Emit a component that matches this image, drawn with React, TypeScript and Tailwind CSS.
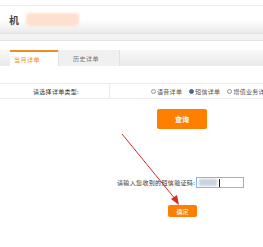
import React from 'react';

const font = { fontFamily: '"Noto Sans CJK SC", "Liberation Sans", sans-serif' };

function Radio({ checked, label }: { checked?: boolean; label: string }) {
  return (
    <span className="flex items-center gap-[1px]">
      <span
        className={
          'inline-block h-[5px] w-[5px] shrink-0 rounded-full border ' +
          (checked ? 'border-[#3a6ea5] bg-[#3a6ea5]' : 'border-[#9a9a9a] bg-[#f4f4f4]')
        }
      />
      <span>{label}</span>
    </span>
  );
}

export default function App() {
  return (
    <div className="relative h-[247px] w-[263px] overflow-hidden bg-white text-[#333]" style={font}>
      {/* header */}
      <div className="mt-[5px] border-t border-[#ececec]">
        <div className="flex h-[27px] items-center gap-[7px] bg-gradient-to-b from-white via-white to-[#ebebeb] pl-[9px]">
          <span className="text-[10px] font-bold leading-none text-[#444]">机</span>
          <span className="h-[13px] w-[53px] rounded-sm bg-[#fde0d0] blur-[1px]" />
        </div>
        <div className="h-[8px] border-y border-[#e4e4e4] bg-[#f3f3f3]" />
      </div>

      {/* tabs */}
      <div className="mt-[9px] flex h-[16px] bg-gradient-to-b from-[#f9f9f9] to-[#e9e9e9] text-[6px] tracking-[0.5px]">
        <div className="ml-[10px] flex w-[48px] shrink-0 items-center border-t-2 border-[#f08a24] bg-white pl-[4px] text-[#f08a24]">
          当月详单
        </div>
        <div className="flex w-[62px] shrink-0 items-center border-x border-[#e2e2e2] bg-[#f0f0f0] pl-[14px] text-[#777]">
          历史详单
        </div>
      </div>

      {/* type row */}
      <div className="mt-[17px] flex h-[16px] border-y border-[#ececec] text-[6px] tracking-[0.3px]">
        <div className="flex w-[110px] shrink-0 items-center border-r border-[#ececec] pl-[33px]">
          请选择详单类型:
        </div>
        <div className="flex min-w-0 flex-1 items-center gap-[7px] overflow-hidden whitespace-nowrap pl-[41px] text-[#555]">
          <Radio label="语音详单" />
          <Radio checked label="短信详单" />
          <Radio label="增值业务详单" />
        </div>
      </div>

      <div className="mt-[10px] flex pl-[157px]">
        <button className="h-[20px] w-[50px] rounded-[2px] bg-[#ff8000] text-[7px] font-bold text-white">
          查询
        </button>
      </div>

      {/* verification */}
      <div className="mt-[48px] flex items-center gap-[1px] whitespace-nowrap pl-[117px] text-[6px] tracking-[0.35px]">
        <span>请输入您收到的短信验证码:</span>
        <div className="flex h-[11px] w-[48px] shrink-0 items-center border border-[#8fb3d9] bg-white pl-[2px]">
          <span className="h-[7px] w-[18px] bg-[#c9d3df] blur-[1px]" />
          <span className="ml-[2px] h-[8px] w-[1px] bg-[#222]" />
        </div>
      </div>

      <div className="mt-[17px] flex pl-[168px]">
        <button className="h-[12px] w-[29px] rounded-[2px] bg-[#ff8000] text-[6px] text-white">确定</button>
      </div>

      {/* annotation arrow */}
      <svg className="absolute left-0 top-0" width="263" height="247" viewBox="0 0 263 247">
        <line x1="122" y1="134" x2="176" y2="200" stroke="#d42a2a" strokeWidth="1" />
        <polygon points="179,205 171,199 177,195" fill="#d42a2a" />
      </svg>
    </div>
  );
}
